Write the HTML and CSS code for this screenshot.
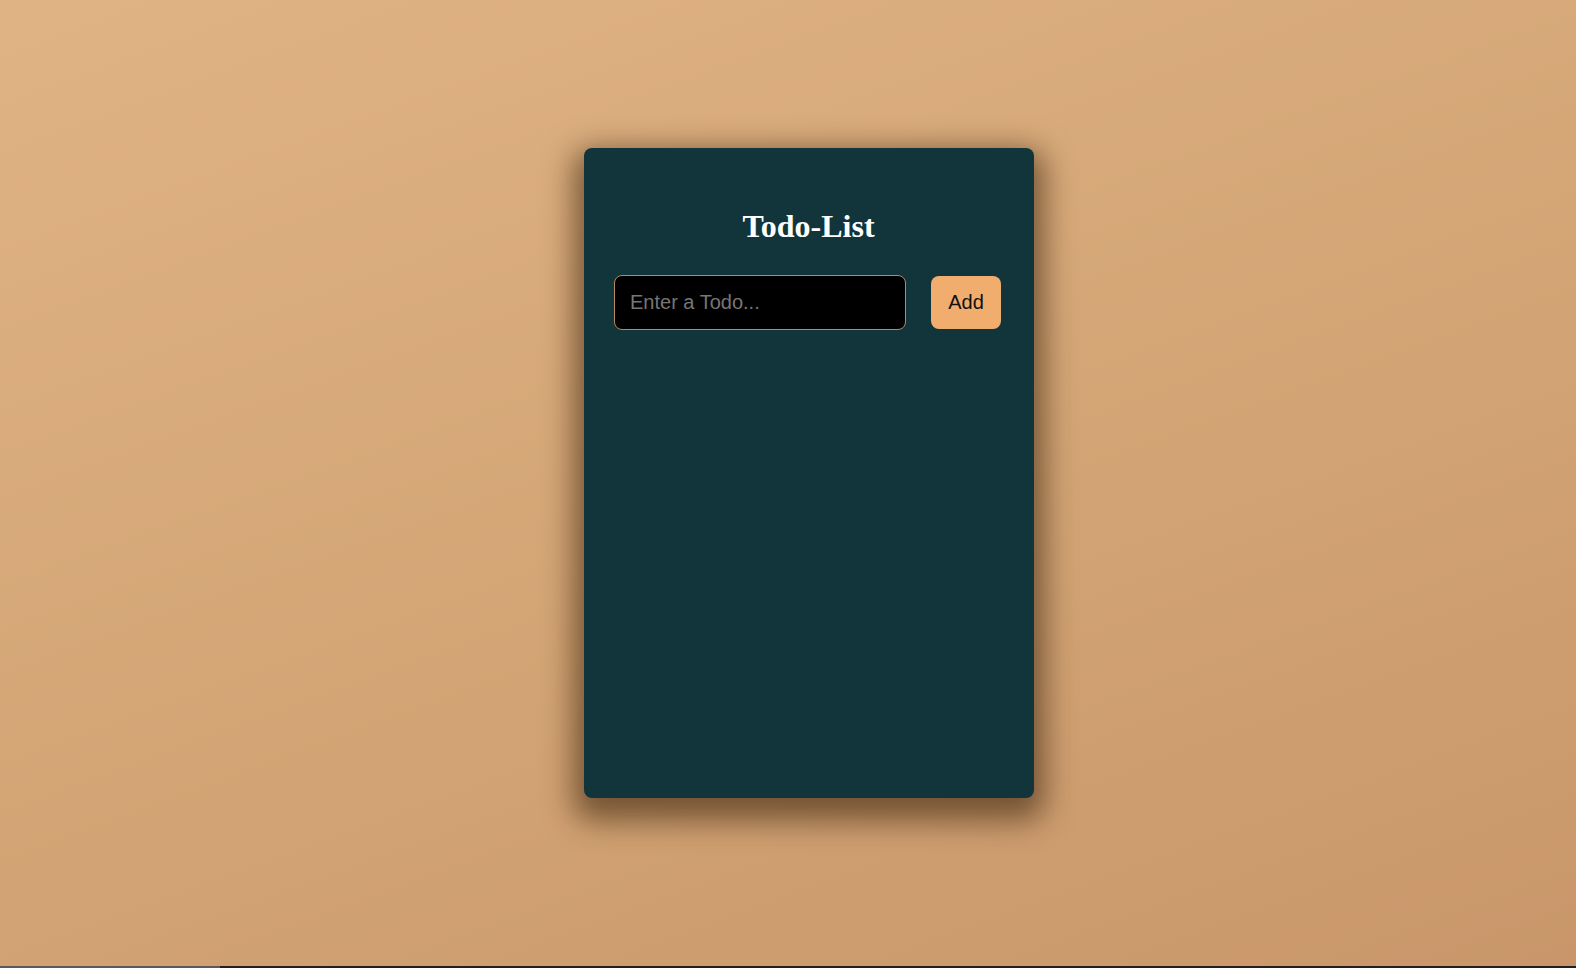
FILE: index.html
```html
<!DOCTYPE html>
<html lang="en">
<head>
<meta charset="utf-8">
<title>Todo-List</title>
<link rel="stylesheet" href="styles.css">
</head>
<body>
<main class="page">
  <section class="card">
    <h1 class="title">Todo-List</h1>
    <div class="entry">
      <input class="todo-input" type="text" placeholder="Enter a Todo...">
      <button class="add-btn" type="button">Add</button>
    </div>
    <ul class="todo-list"></ul>
  </section>
</main>
<div class="taskbar">
  <span class="tb-grey"></span>
  <span class="tb-dark"></span>
</div>
</body>
</html>
```

FILE: styles.css
```css
* { box-sizing: border-box; }
html, body { margin: 0; padding: 0; }
body {
  width: 1576px;
  height: 968px;
  overflow: hidden;
  background: linear-gradient(160deg, #e0b385 0%, #d4a676 50%, #c8966a 100%);
  display: flex;
  flex-direction: column;
}
.page {
  flex: 1;
  padding: 148px 0 0 584px;
}
.card {
  width: 450px;
  height: 650px;
  background: #12343b;
  border-radius: 8px;
  box-shadow: 0 12px 30px 10px rgba(55, 32, 10, 0.6);
  padding: 30px 33px 30px 30px;
  display: flex;
  flex-direction: column;
}
.title {
  margin: 30px 0 30px 2px;
  text-align: center;
  font-family: "Liberation Serif", "Times New Roman", serif;
  font-weight: bold;
  font-size: 32px;
  line-height: 37px;
  color: #ffffff;
}
.entry {
  display: flex;
  align-items: center;
  gap: 25px;
}
.todo-input {
  width: 292px;
  height: 55px;
  background: #000;
  border: 1px solid #b8895c;
  border-radius: 8px;
  padding: 0 15px;
  font-family: "Liberation Sans", Arial, sans-serif;
  font-size: 20px;
  color: #fff;
  outline: none;
}
.todo-input::placeholder { color: #767676; }
.add-btn {
  width: 70px;
  height: 53px;
  background: #f0ad6e;
  border: none;
  border-radius: 8px;
  font-family: "Liberation Sans", Arial, sans-serif;
  font-size: 20px;
  color: #111;
  padding: 0;
}
.todo-list { margin: 0; padding: 0; list-style: none; }
.taskbar {
  height: 2px;
  display: flex;
}
.tb-grey { width: 220px; background: #5a5a5a; }
.tb-dark { flex: 1; background: #231f1b; }
```
